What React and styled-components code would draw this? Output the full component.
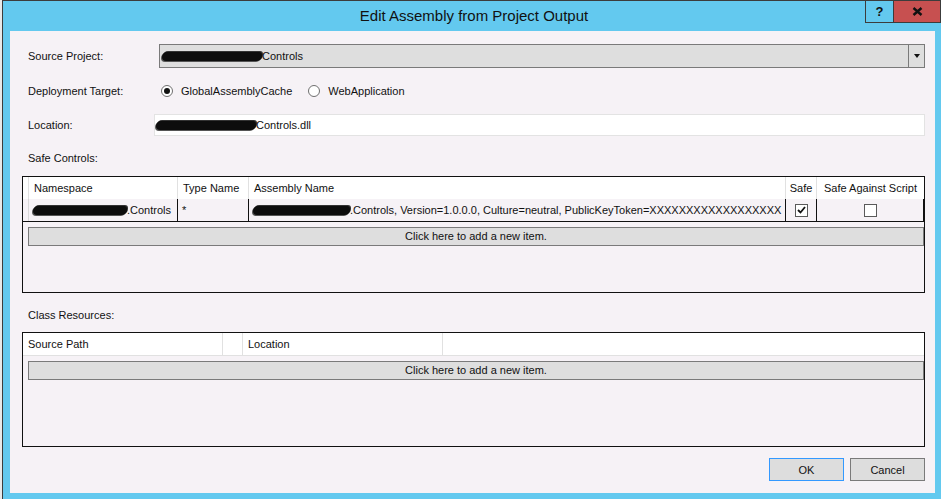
import styled, { createGlobalStyle } from "styled-components";

const GlobalStyle = createGlobalStyle`
  *, *::before, *::after {
    box-sizing: border-box;
  }
  html, body {
    margin: 0;
    padding: 0;
    background: #e9e9e9;
  }
  body {
    font-family: "Liberation Sans", Arial, sans-serif;
    font-size: 11px;
    color: #111;
  }
`;

const Window = styled.div`
  width: 939px;
  height: 499px;
  margin-left: 2px;
  border-left: 1px solid #3c3c3c;
  border-top: 1px solid #3c3c3c;
  background: #63c9ef;
  display: flex;
  flex-direction: column;
`;

const TitleBar = styled.div`
  height: 30px;
  flex: none;
  display: grid;
  grid-template-columns: 1fr auto 1fr;
  align-items: start;
`;

const Title = styled.div`
  grid-column: 2;
  font-size: 15px;
  line-height: 30px;
  color: #111;
  padding-left: 4px;
`;

const Caption = styled.div`
  grid-column: 3;
  justify-self: end;
  display: flex;
  height: 22px;
  border: 1px solid #3c3c3c;
  border-top: none;
`;

const CaptionButton = styled.div`
  width: ${(p) => p.$w}px;
  display: flex;
  align-items: center;
  justify-content: center;
  background: ${(p) => (p.$close ? "#c75050" : "#63c9ef")};
  border-left: ${(p) => (p.$close ? "1px solid #3c3c3c" : "none")};
  font-weight: bold;
  font-size: 13px;
  color: #111;
`;

const Body = styled.div`
  flex: 1;
  margin: 0 6px 6px 7px;
  background: #f6f2f6;
  padding: 13px 10px 0 12px;
  display: flex;
  flex-direction: column;
`;

const FormRow = styled.div`
  display: grid;
  grid-template-columns: ${(p) => p.$label}px 1fr;
  align-items: center;
  height: ${(p) => p.$h}px;
  margin-top: ${(p) => p.$top || 0}px;
`;

const Label = styled.div`
  padding-left: 6px;
  line-height: 16px;
  margin-top: ${(p) => p.$top || 0}px;
`;

const Combo = styled.div`
  height: 24px;
  border: 1px solid #7a7a7a;
  background: #dedede;
  display: flex;
  align-items: center;
`;

const ComboText = styled.div`
  flex: 1;
  padding-left: 2px;
  display: flex;
  align-items: center;
`;

const ComboArrow = styled.div`
  width: 16px;
  height: 100%;
  border-left: 1px solid #7a7a7a;
  display: flex;
  align-items: center;
  justify-content: center;
  &::after {
    content: "";
    border-left: 3px solid transparent;
    border-right: 3px solid transparent;
    border-top: 4px solid #111;
  }
`;

const TextBox = styled.div`
  height: 22px;
  border: 1px solid #e3e3e3;
  background: #fff;
  display: flex;
  align-items: center;
  padding-left: 1px;
`;

const Radios = styled.div`
  display: flex;
  align-items: center;
  gap: 16px;
  padding-left: 2px;
`;

const RadioOption = styled.label`
  display: flex;
  align-items: center;
  gap: 8px;
`;

const RadioDot = styled.span`
  width: 12px;
  height: 12px;
  border-radius: 50%;
  border: 1px solid #6f6f6f;
  background: #fff;
  display: flex;
  align-items: center;
  justify-content: center;
  &::after {
    content: "";
    width: 6px;
    height: 6px;
    border-radius: 50%;
    background: ${(p) => (p.$on ? "#111" : "transparent")};
  }
`;

const Redacted = styled.span`
  display: inline-block;
  flex: none;
  width: ${(p) => p.$w}px;
  height: 9px;
  background: #0d0d0d;
  border-radius: 5px 3px 5px 4px;
  box-shadow: 1px -1px 0 #333, -1px 1px 0 #555;
`;

const Grid = styled.div`
  height: ${(p) => p.$h}px;
  margin-top: ${(p) => p.$top}px;
  border: 1px solid #111;
  background: #f6f2f6;
  display: flex;
  flex-direction: column;
`;

const HeaderRow = styled.div`
  display: flex;
  flex: none;
  height: ${(p) => (p.$line ? 23 : 22)}px;
  background: #fff;
  border-bottom: ${(p) => (p.$line ? "1px solid #e1e1e1" : "none")};
`;

const HeadCell = styled.div`
  width: ${(p) => (p.$w ? `${p.$w}px` : "auto")};
  flex: ${(p) => (p.$w ? "none" : 1)};
  border-right: ${(p) => (p.$last ? "none" : "1px solid #e1e1e1")};
  padding-left: ${(p) => (p.$center ? 0 : 5)}px;
  text-align: ${(p) => (p.$center ? "center" : "left")};
  line-height: 22px;
  white-space: nowrap;
  overflow: hidden;
`;

const DataRow = styled.div`
  display: flex;
  flex: none;
  height: 23px;
  border-bottom: 1px solid #111;
`;

const RowHeader = styled.div`
  width: 6px;
  border-right: 1px solid #d8d8d8;
`;

const Cell = styled.div`
  width: ${(p) => p.$w}px;
  flex: none;
  border-right: 1px solid #111;
  padding-left: ${(p) => (p.$center ? 0 : 4)}px;
  display: flex;
  align-items: center;
  justify-content: ${(p) => (p.$center ? "center" : "flex-start")};
  white-space: nowrap;
  overflow: hidden;
`;

const Check = styled.span`
  width: 13px;
  height: 13px;
  border: 1px solid #5a5a5a;
  background: #fff;
  display: flex;
  align-items: center;
  justify-content: center;
`;

const AddBar = styled.div`
  margin: 5px 0 0 5px;
  height: 19px;
  border: 1px solid #7a7a7a;
  background: #dedede;
  text-align: center;
  line-height: 17px;
`;

const Footer = styled.div`
  margin-top: 11px;
  display: flex;
  justify-content: flex-end;
  gap: 6px;
`;

const Button = styled.button`
  width: 75px;
  height: 23px;
  font-family: inherit;
  font-size: 11px;
  color: #111;
  background: #dddddd;
  border: 1px solid ${(p) => (p.$default ? "#3399ff" : "#7a7a7a")};
  padding: 0;
`;

export default function App() {
  return (
    <>
      <GlobalStyle />
      <Window>
        <TitleBar>
          <Title>Edit Assembly from Project Output</Title>
          <Caption>
            <CaptionButton $w={27}>?</CaptionButton>
            <CaptionButton $w={47} $close>
              <svg width="11" height="9" viewBox="0 0 11 9">
                <path d="M1.5 1 L9.5 8 M9.5 1 L1.5 8" stroke="#111" strokeWidth="2.4" />
              </svg>
            </CaptionButton>
          </Caption>
        </TitleBar>
        <Body>
          <FormRow $label={137} $h={24}>
            <Label>Source Project:</Label>
            <Combo>
              <ComboText>
                <Redacted $w={100} />
                Controls
              </ComboText>
              <ComboArrow />
            </Combo>
          </FormRow>
          <FormRow $label={137} $h={24} $top={11}>
            <Label>Deployment Target:</Label>
            <Radios>
              <RadioOption>
                <RadioDot $on />
                GlobalAssemblyCache
              </RadioOption>
              <RadioOption>
                <RadioDot />
                WebApplication
              </RadioOption>
            </Radios>
          </FormRow>
          <FormRow $label={132} $h={22} $top={11}>
            <Label>Location:</Label>
            <TextBox>
              <Redacted $w={100} />
              Controls.dll
            </TextBox>
          </FormRow>
          <Label $top={14}>Safe Controls:</Label>
          <Grid $h={117} $top={10}>
            <HeaderRow>
              <HeadCell $w={6} />
              <HeadCell $w={149}>Namespace</HeadCell>
              <HeadCell $w={71}>Type Name</HeadCell>
              <HeadCell $w={537}>Assembly Name</HeadCell>
              <HeadCell $w={31} $center>Safe</HeadCell>
              <HeadCell $last $center>Safe Against Script</HeadCell>
            </HeaderRow>
            <DataRow>
              <RowHeader />
              <Cell $w={149}>
                <Redacted $w={94} />
                .Controls
              </Cell>
              <Cell $w={71}>*</Cell>
              <Cell $w={537}>
                <Redacted $w={97} />
                .Controls, Version=1.0.0.0, Culture=neutral, PublicKeyToken=XXXXXXXXXXXXXXXXXX
              </Cell>
              <Cell $w={31} $center>
                <Check>
                  <svg width="9" height="8" viewBox="0 0 9 8">
                    <path d="M1 4 L3.5 6.5 L8 1" stroke="#111" strokeWidth="1.8" fill="none" />
                  </svg>
                </Check>
              </Cell>
              <Cell $w={107} $center>
                <Check />
              </Cell>
            </DataRow>
            <AddBar>Click here to add a new item.</AddBar>
          </Grid>
          <Label $top={14}>Class Resources:</Label>
          <Grid $h={115} $top={9}>
            <HeaderRow $line>
              <HeadCell $w={200}>Source Path</HeadCell>
              <HeadCell $w={20} />
              <HeadCell $w={200}>Location</HeadCell>
              <HeadCell $last />
            </HeaderRow>
            <AddBar>Click here to add a new item.</AddBar>
          </Grid>
          <Footer>
            <Button $default>OK</Button>
            <Button>Cancel</Button>
          </Footer>
        </Body>
      </Window>
    </>
  );
}
